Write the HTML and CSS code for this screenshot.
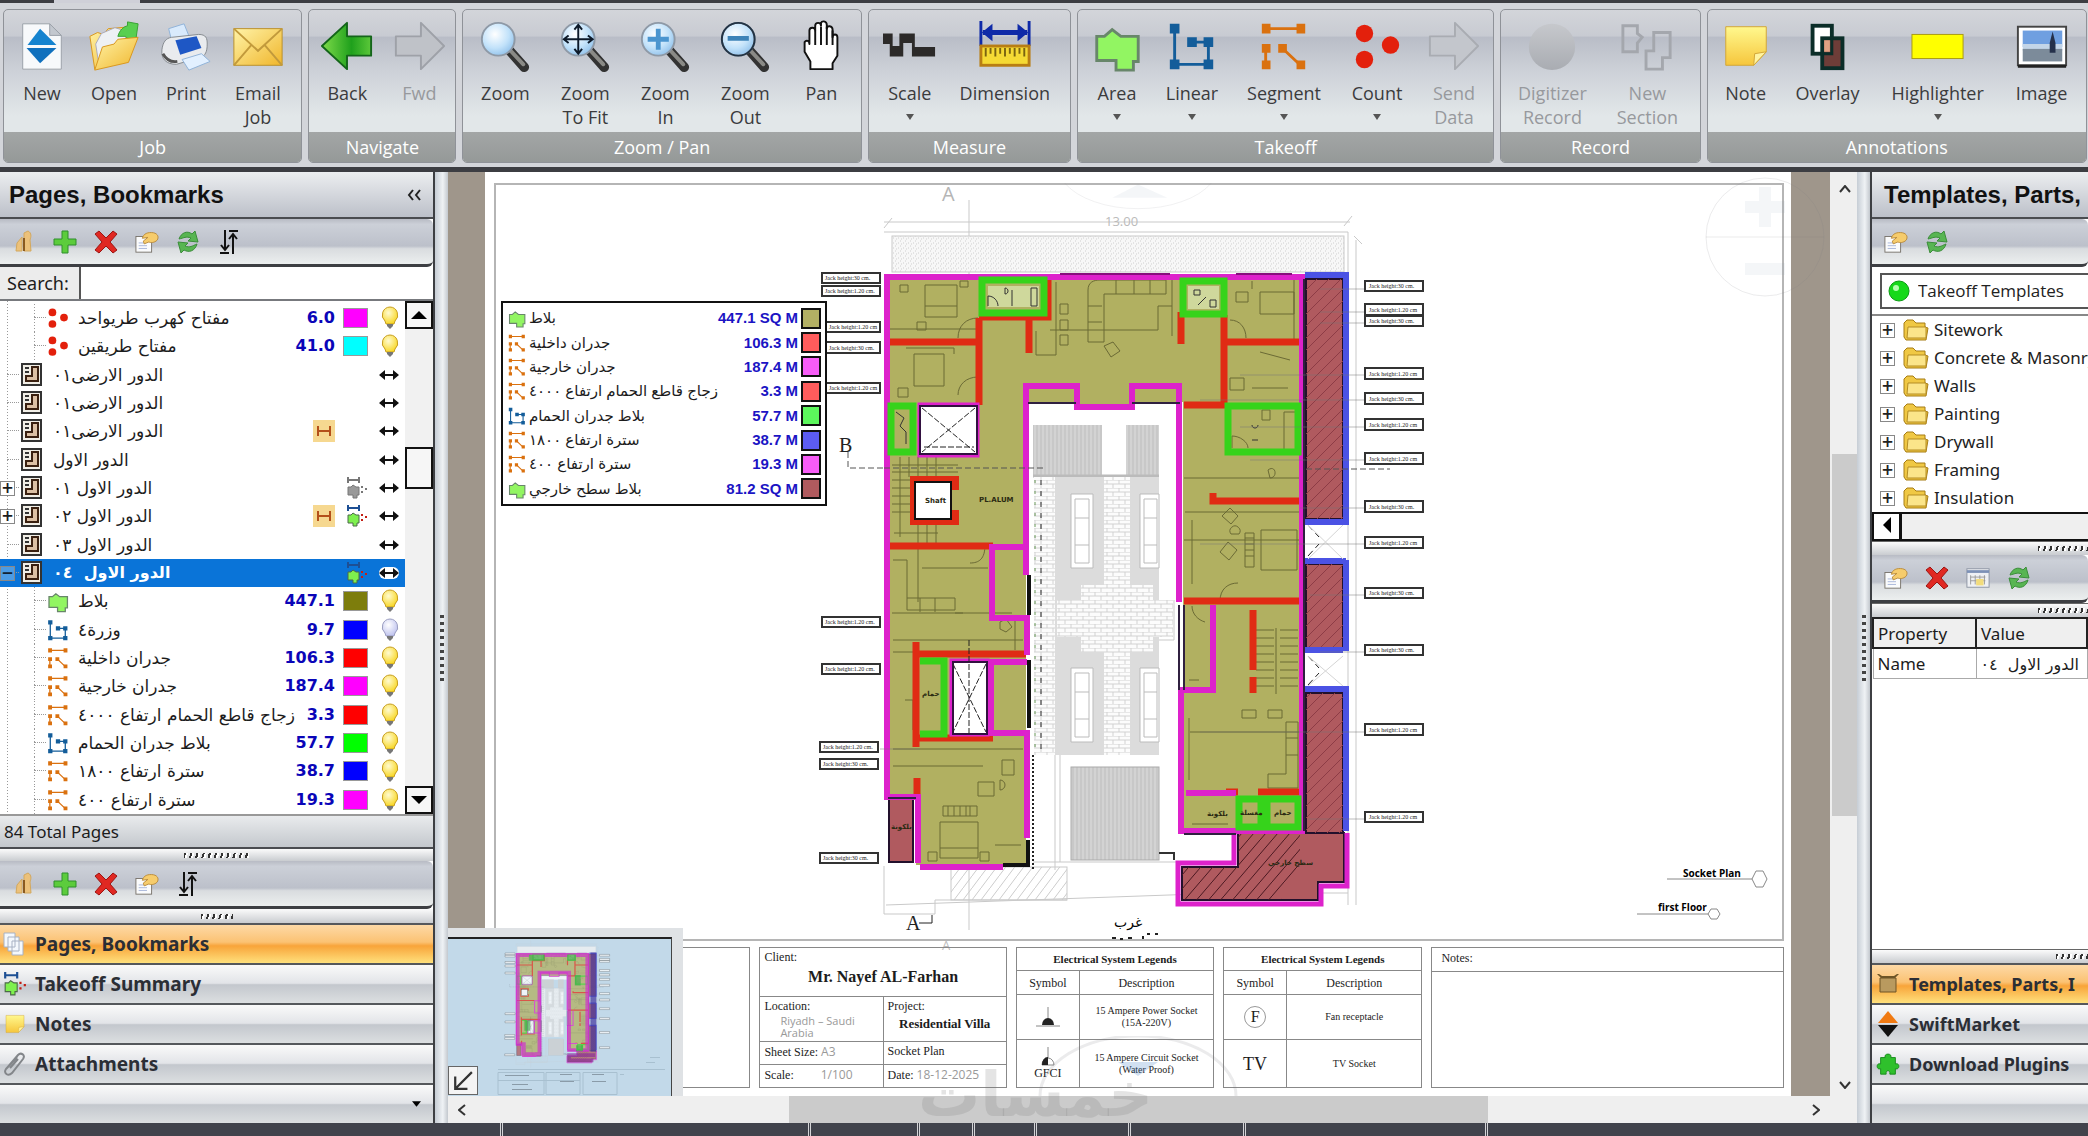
FILE: index.html
```html
<!DOCTYPE html>
<html lang="en">
<head>
<meta charset="utf-8">
<title>Takeoff</title>
<link rel="stylesheet" href="styles.css">
</head>
<body>
<svg class="defs" aria-hidden="true">
<defs>
  <linearGradient id="gYellow" x1="0" y1="0" x2="1" y2="1"><stop offset="0" stop-color="#fff3a8"/><stop offset="1" stop-color="#f0b62c"/></linearGradient>
  <linearGradient id="gNote" x1="0" y1="0" x2="0" y2="1"><stop offset="0" stop-color="#fff88e"/><stop offset="1" stop-color="#f6c63c"/></linearGradient>
  <linearGradient id="gGreen" x1="0" y1="0" x2="1" y2="0"><stop offset="0" stop-color="#7fdc4a"/><stop offset=".6" stop-color="#1fa01c"/><stop offset="1" stop-color="#5cc83a"/></linearGradient>
  <linearGradient id="gGray" x1="0" y1="0" x2="0" y2="1"><stop offset="0" stop-color="#c6c8cc"/><stop offset="1" stop-color="#a9acb2"/></linearGradient>
  <radialGradient id="gLens" cx=".4" cy=".35" r=".7"><stop offset="0" stop-color="#fff"/><stop offset=".6" stop-color="#c2e2fa"/><stop offset="1" stop-color="#8fc0ea"/></radialGradient>
  <radialGradient id="gBulb" cx=".4" cy=".35" r=".7"><stop offset="0" stop-color="#fffbd0"/><stop offset="1" stop-color="#f8d51c"/></radialGradient>
  <radialGradient id="gBulbOff" cx=".4" cy=".35" r=".7"><stop offset="0" stop-color="#fff"/><stop offset="1" stop-color="#bcc0ee"/></radialGradient>
  <pattern id="pHatch" width="12" height="12" patternUnits="userSpaceOnUse"><path d="M0 12L12 0" stroke="#8d3c46" stroke-width="1"/></pattern>
  <pattern id="pHatchDark" width="12" height="14" patternUnits="userSpaceOnUse"><path d="M0 14L12 0" stroke="#4a1720" stroke-width="1"/></pattern>
  <pattern id="pHatchLight" width="9" height="12" patternUnits="userSpaceOnUse"><path d="M0 12L9 0" stroke="#ccc" stroke-width="1"/></pattern>
  <pattern id="pStripe" width="4" height="4" patternUnits="userSpaceOnUse"><rect width="4" height="4" fill="#d3d3d3"/><path d="M1 0V4" stroke="#bdbdbd"/></pattern>
  <pattern id="pBrick" width="12" height="8" patternUnits="userSpaceOnUse"><rect width="12" height="8" fill="#fcfcfc"/><path d="M0 0H12M0 4H12M3 0V4M9 4V8" stroke="#d2d2d2" stroke-width="1"/></pattern>
  <pattern id="pDots" width="5" height="5" patternUnits="userSpaceOnUse"><rect width="5" height="5" fill="#f7f7f7"/><path d="M0 1h1M3 3h1M1 4h1" stroke="#cfcfcf"/></pattern>

  <symbol id="i-new" viewBox="0 0 56 56"><path d="M8 5h28l12 12v35H8z" fill="#f7f9fb" stroke="#9aa0a8"/><path d="M36 5v12h12z" fill="#c3c8cf" stroke="#9aa0a8"/><path d="M26 10L43 27H13z" fill="#1583cf"/><path d="M12 30H43L26 46z" fill="#1070bd"/></symbol>
  <symbol id="i-open" viewBox="0 0 56 56"><path d="M3 18l8-4 6 2 5-6 24-2-2 12-8 22L8 52z" fill="url(#gYellow)" stroke="#d8961c"/><path d="M9 26l6-11 14-6 13 4-4 12-20 8-6 12z" fill="#eef1f4" stroke="#aab"/><path d="M32 18c2-7 6-10 10-11V3l11 2-2 14-8 2-3-3z" fill="#58cf50" stroke="#37a033"/><path d="M8 53l8-24 12-3 4-5 21-2-10 26z" fill="url(#gYellow)" stroke="#d8961c"/></symbol>
  <symbol id="i-print" viewBox="0 0 56 56"><path d="M10 10l16-5 6 15-18 6z" fill="#d9eafc" stroke="#8fb2d8"/><path d="M3 32c1-8 4-12 10-13l28-3c8 0 9 4 9 10 0 8-2 12-7 14L18 47C8 47 2 42 3 32z" fill="#e9ebee" stroke="#84898f"/><path d="M17 22l22-4 5 12-22 7z" fill="#1e57c5"/><path d="M24 42l20-6 9 8-22 9z" fill="#e2f0ff" stroke="#8fb2d8"/><path d="M4 36c4 7 9 9 15 8" fill="none" stroke="#555" stroke-width="3"/></symbol>
  <symbol id="i-mail" viewBox="0 0 56 56"><rect x="3" y="10" width="50" height="38" fill="url(#gYellow)" stroke="#b98f2a"/><path d="M3 10L28 33 53 10M3 48L21 27M53 48L35 27" fill="none" stroke="#c29a3c" stroke-width="2"/></symbol>
  <symbol id="i-back" viewBox="0 0 56 56"><path d="M2 28L28 4v14h25v20H28v14z" fill="url(#gGreen)" stroke="#14651a" stroke-width="2" stroke-linejoin="round"/></symbol>
  <symbol id="i-fwd" viewBox="0 0 56 56"><path d="M54 28L30 4v14H4v20h26v14z" fill="#bfc2c8" stroke="#9ea1a8" stroke-width="2" stroke-linejoin="round"/></symbol>
  <symbol id="i-send" viewBox="0 0 56 56"><path d="M53 28L29 4v14H3v20h26v14z" fill="#c3c6cc" stroke="#a9acb2" stroke-width="2" stroke-linejoin="round"/></symbol>
  <symbol id="i-lens" viewBox="0 0 56 56"><path d="M33 33L48 50" stroke="#333" stroke-width="10" stroke-linecap="round"/><path d="M33 32L47 47" stroke="#8a8a86" stroke-width="4" stroke-linecap="round"/><circle cx="21" cy="21" r="17" fill="url(#gLens)" stroke="#8e99a6" stroke-width="2"/></symbol>
  <symbol id="i-fit" viewBox="0 0 56 56"><use href="#i-lens"/><path d="M21 6V36M6 21H36M17 11l4-5 4 5M17 31l4 5 4-5M11 17l-5 4 5 4M31 17l5 4-5 4" fill="none" stroke="#0d1a2a" stroke-width="2"/></symbol>
  <symbol id="i-in" viewBox="0 0 56 56"><use href="#i-lens"/><path d="M21 10V32M10 21H32" stroke="#4b95cf" stroke-width="5"/></symbol>
  <symbol id="i-out" viewBox="0 0 56 56"><use href="#i-lens"/><circle cx="21" cy="21" r="17" fill="none" stroke="#234" stroke-width="2"/><path d="M10 20H32" stroke="#3d83b8" stroke-width="5"/></symbol>
  <symbol id="i-pan" viewBox="0 0 56 56"><path d="M17 52V44L11 34V24c2-3 5-1 5 2V12c0-4 6-4 6 0V7c0-4 6-4 6 0V5c0-4 6-3 6 1v4c0-4 6-3 6 1v8c0-4 5-4 5 0v19l-5 8v6z" fill="#fff" stroke="#111" stroke-width="2" stroke-linejoin="round"/><path d="M22 12V27M28 8V27M34 8V27M40 12V27" stroke="#111" stroke-width="2"/></symbol>
  <symbol id="i-scale" viewBox="0 0 56 56"><path d="M0 15H10V28H17V15H33V29H54V39H30V25H21V39H7V26H0z" fill="#2c2a29"/></symbol>
  <symbol id="i-dim" viewBox="0 0 56 56"><path d="M3 2V28M53 2V28" stroke="#0f2aa8" stroke-width="3"/><path d="M5 14H51" stroke="#0f2aa8" stroke-width="5"/><path d="M4 14l11-9v18zM52 14L41 5v18z" fill="#0f2aa8"/><rect x="3" y="28" width="50" height="20" fill="#f5da34" stroke="#b87e14" stroke-width="3"/><path d="M8 30v9M13 30v6M18 30v9M23 30v6M28 30v9M33 30v6M38 30v9M43 30v6M48 30v9" stroke="#7a6410" stroke-width="2"/></symbol>
  <symbol id="i-area" viewBox="0 0 56 56"><path d="M7 18H15L23 11 32 18H50V44H45V53H27V43H7z" fill="#92f562" stroke="#68866a" stroke-width="3"/></symbol>
  <symbol id="i-linear" viewBox="0 0 56 56"><path d="M10 9V47H45V24H28" fill="none" stroke="#135d9a" stroke-width="3"/><path d="M5 5h10v10H5zM5 42h10v10H5zM40 42h10v10H40zM40 19h10v10H40zM23 19h10v10H23z" fill="#135d9a"/></symbol>
  <symbol id="i-segment" viewBox="0 0 56 56"><path d="M9 10H46M9 31V47M26 30L44 47" fill="none" stroke="#da710f" stroke-width="3"/><path d="M5 5h9v10H5zM41 5h9v10H41zM5 26h9v9H5zM5 43h9v9H5zM22 26h9v9H22zM41 43h9v9H41z" fill="#da710f"/></symbol>
  <symbol id="i-count" viewBox="0 0 56 56"><g fill="#e3200c"><circle cx="15" cy="15" r="9"/><circle cx="42" cy="27" r="9"/><circle cx="15" cy="42" r="9"/></g></symbol>
  <symbol id="i-record" viewBox="0 0 56 56"><ellipse cx="28" cy="29" rx="24" ry="24" fill="url(#gGray)"/></symbol>
  <symbol id="i-section" viewBox="0 0 56 56"><path d="M3 7h15v8l5 4-5 6v9H3zM27 33h8V14h17v26h-8v12H27z" fill="none" stroke="#a4a7ad" stroke-width="3"/></symbol>
  <symbol id="i-note" viewBox="0 0 56 56"><path d="M7 8H49V34L36 48H7z" fill="url(#gNote)" stroke="#d1a537"/><path d="M49 34L36 48l1-12z" fill="#fff4a0" stroke="#d1a537"/></symbol>
  <symbol id="i-overlay" viewBox="0 0 56 56"><rect x="12" y="7" width="20" height="29" fill="#fff" stroke="#0b2d28" stroke-width="4"/><rect x="22" y="20" width="21" height="31" fill="#6e3d38" stroke="#0b2d28" stroke-width="4"/><rect x="24" y="22" width="6" height="12" fill="#e2a183"/><path d="M22 36H32V20" fill="none" stroke="#0b2d28" stroke-width="3"/></symbol>
  <symbol id="i-high" viewBox="0 0 56 56"><rect x="1" y="16" width="53" height="25" fill="#ff0" stroke="#a89a12"/></symbol>
  <symbol id="i-image" viewBox="0 0 56 56"><rect x="3" y="8" width="50" height="40" fill="#fff" stroke="#444" stroke-width="2"/><rect x="8" y="12" width="41" height="17" fill="#6f9fe0"/><path d="M8 26h41v7H8z" fill="#c3d5e8"/><rect x="8" y="31" width="41" height="13" fill="#7c8b9a"/><path d="M39 13l3 12v10h-6V25z" fill="#24304a"/><path d="M3 49H53" stroke="#222" stroke-width="3"/></symbol>

  <symbol id="t-book" viewBox="0 0 24 24"><path d="M4 21l1-8 5-6v14zM12 21V3l4-2c4 2 3 6 2 9l1 11z" fill="#ecc17a" stroke="#d3a85e"/><path d="M12 8v13" stroke="#8a5a20" stroke-width="2"/></symbol>
  <symbol id="t-plus" viewBox="0 0 24 24"><path d="M9 1h6v8h8v6h-8v8H9v-8H1V9h8z" fill="#5ccc3c" stroke="#2f8f2c"/></symbol>
  <symbol id="t-x" viewBox="0 0 24 24"><path d="M1 4l4-3 7 7 7-7 4 3-7 8 7 8-4 3-7-7-7 7-4-3 7-8z" fill="#e02822" stroke="#9c1512"/></symbol>
  <symbol id="t-prop" viewBox="0 0 26 24"><rect x="1" y="6" width="17" height="17" fill="#fafbfc" stroke="#77726a"/><path d="M4 13h8M4 16h9M4 19h9" stroke="#a5b4d8"/><path d="M8 8c1-5 6-7 12-6 5 1 6 5 4 8-3 3-7 3-9 2l-5 2-1-3 5-4z" fill="#f6cc6c" stroke="#b98a3a"/></symbol>
  <symbol id="t-refresh" viewBox="0 0 24 24"><path d="M3 9C5 3 11 0 16 4l3-3 3 11-10-1 3-3c-5-2-7 0-12 1zM21 14c-2 7-8 9-13 6l-3 3-3-11 10 1-3 3c5 2 7 0 12-2z" fill="#58b552" stroke="#3b8d3a"/></symbol>
  <symbol id="t-sort" viewBox="0 0 18 24"><path d="M5 0V20M1 15l4 5 4-5M0 23H9M13 24V4M9 9l4-5 4 5M9 1H18" fill="none" stroke="#111" stroke-width="2"/></symbol>
  <symbol id="t-grid" viewBox="0 0 26 22"><rect x="1" y="1" width="24" height="20" fill="#eef0f4" stroke="#8b93a2"/><path d="M1 4H25" stroke="#7d91b6" stroke-width="3"/><path d="M5 10h16M5 14h16M5 8v10M10 8v10M15 8v10M20 8v10" stroke="#999"/><rect x="11" y="12" width="8" height="7" fill="#f2dc7c"/></symbol>
  <symbol id="p-page" viewBox="0 0 21 24"><rect x="1" y="1" width="19" height="21" fill="#f1eee6" stroke="#333" stroke-width="2"/><path d="M4 5h4M4 9h4" stroke="#333" stroke-width="2"/><path d="M11 4h6v14H5v-5h6z" fill="#dcc0a4" stroke="#3a2010" stroke-width="2"/></symbol>
  <symbol id="p-arrows" viewBox="0 0 20 12"><path d="M1 6H19" stroke="#111" stroke-width="2"/><path d="M0 6l6-5v10zM20 6l-6-5v10z" fill="#111"/></symbol>
  <symbol id="p-bulb" viewBox="0 0 18 24"><path d="M9 1a8 8 0 0 0-5 14l1 3h8l1-3A8 8 0 0 0 9 1z" fill="url(#gBulb)" stroke="#c69d20"/><path d="M6 18h6v2l-3 3-3-3z" fill="#777"/></symbol>
  <symbol id="p-bulboff" viewBox="0 0 18 24"><path d="M9 1a8 8 0 0 0-5 14l1 3h8l1-3A8 8 0 0 0 9 1z" fill="url(#gBulbOff)" stroke="#9a9dc0"/><path d="M6 18h6v2l-3 3-3-3z" fill="#777"/></symbol>
  <symbol id="p-h" viewBox="0 0 22 22"><rect width="22" height="22" fill="#f6d890"/><path d="M5 6v10M17 6v10M5 11H17" stroke="#b4501a" stroke-width="2"/></symbol>
  <symbol id="p-sum" viewBox="0 0 22 22"><path d="M2 0v6M13 0v6M2 3h11" stroke="#1d4f94" stroke-width="2"/><path d="M2 10h3l2-2 3 2h3v8h-2v3H7v-3H2z" fill="#7ef04e" stroke="#4b6a48"/><path d="M15 10h2M15 15h2M19 12h2" stroke="#c31f14" stroke-width="2"/></symbol>
  <symbol id="p-sumgray" viewBox="0 0 22 22"><path d="M2 0v6M13 0v6M2 3h11M15 10h2M15 15h2M19 12h2" stroke="#777" stroke-width="2"/><path d="M2 10h3l2-2 3 2h3v8h-2v3H7v-3H2z" fill="#999" stroke="#777"/></symbol>
  <symbol id="p-folder" viewBox="0 0 26 22"><path d="M1 4l3-3h6l3 3h9v4l3 1-2 12H3L1 18z" fill="#f0c844" stroke="#a67c14"/><path d="M5 8h18v11H4z" fill="#fbe58a" stroke="#b58d24"/></symbol>
  <symbol id="n-pages" viewBox="0 0 24 24"><path d="M1 1h11v14H1zM5 5h11v14H5zM9 9h11v14H9z" fill="#f4f8fd" stroke="#a8b2c4"/></symbol>
  <symbol id="n-clip" viewBox="0 0 24 26"><path d="M4 17L15 4c3-3 8 0 5 4L9 22c-4 4-9 0-6-4L14 6M7 17l8-9" fill="none" stroke="#83868a" stroke-width="2"/></symbol>
  <symbol id="n-box" viewBox="0 0 24 22"><path d="M4 5h16v14H4z" fill="#b99a5f" stroke="#6e5526"/><path d="M1 1l4 4h14l4-4-2 0-3 2H6L3 1z" fill="#6e5526"/></symbol>
  <symbol id="n-swift" viewBox="0 0 24 26"><path d="M12 0l10 12H2z" fill="#f07a12"/><path d="M2 14h20L12 26z" fill="#111"/></symbol>
  <symbol id="n-plug" viewBox="0 0 26 26"><path d="M10 6c-2-5 8-5 6 0h5v7c5-2 5 7 0 5v6h-6c1-5-5-5-4 0H5v-6c-5 2-5-7 0-5V6z" fill="#2fc02c" stroke="#178a1b"/></symbol>
</defs>
</svg>

<header class="ribbon">
  <section class="group g-job"><div class="tools">
    <button class="tool"><svg><use href="#i-new"/></svg>New</button>
    <button class="tool"><svg><use href="#i-open"/></svg>Open</button>
    <button class="tool"><svg><use href="#i-print"/></svg>Print</button>
    <button class="tool"><svg><use href="#i-mail"/></svg>Email<br>Job</button>
  </div><h2>Job</h2></section>
  <section class="group g-nav"><div class="tools">
    <button class="tool"><svg><use href="#i-back"/></svg>Back</button>
    <button class="tool" disabled><svg><use href="#i-fwd"/></svg>Fwd</button>
  </div><h2>Navigate</h2></section>
  <section class="group g-zoom"><div class="tools">
    <button class="tool"><svg><use href="#i-lens"/></svg>Zoom</button>
    <button class="tool"><svg><use href="#i-fit"/></svg>Zoom<br>To Fit</button>
    <button class="tool"><svg><use href="#i-in"/></svg>Zoom<br>In</button>
    <button class="tool"><svg><use href="#i-out"/></svg>Zoom<br>Out</button>
    <button class="tool"><svg><use href="#i-pan"/></svg>Pan</button>
  </div><h2>Zoom / Pan</h2></section>
  <section class="group g-measure"><div class="tools">
    <button class="tool drop"><svg><use href="#i-scale"/></svg>Scale</button>
    <button class="tool"><svg><use href="#i-dim"/></svg>Dimension</button>
  </div><h2>Measure</h2></section>
  <section class="group g-takeoff"><div class="tools">
    <button class="tool drop"><svg><use href="#i-area"/></svg>Area</button>
    <button class="tool drop"><svg><use href="#i-linear"/></svg>Linear</button>
    <button class="tool drop"><svg><use href="#i-segment"/></svg>Segment</button>
    <button class="tool drop"><svg><use href="#i-count"/></svg>Count</button>
    <button class="tool" disabled><svg><use href="#i-send"/></svg>Send<br>Data</button>
  </div><h2>Takeoff</h2></section>
  <section class="group g-record"><div class="tools">
    <button class="tool" disabled><svg><use href="#i-record"/></svg>Digitizer<br>Record</button>
    <button class="tool" disabled><svg><use href="#i-section"/></svg>New<br>Section</button>
  </div><h2>Record</h2></section>
  <section class="group g-notes"><div class="tools">
    <button class="tool"><svg><use href="#i-note"/></svg>Note</button>
    <button class="tool"><svg><use href="#i-overlay"/></svg>Overlay</button>
    <button class="tool drop"><svg><use href="#i-high"/></svg>Highlighter</button>
    <button class="tool"><svg><use href="#i-image"/></svg>Image</button>
  </div><h2>Annotations</h2></section>
</header>

<main class="work">
  <aside class="panel left">
    <div class="panel-head"><h1>Pages, Bookmarks</h1><button class="collapse" aria-label="Collapse"><svg viewBox="0 0 14 12"><path d="M6 1L2 6l4 5M13 1L9 6l4 5" fill="none" stroke="#222" stroke-width="2"/></svg></button></div>
    <div class="toolbar">
      <button aria-label="Bookmark"><svg><use href="#t-book"/></svg></button>
      <button aria-label="Add"><svg><use href="#t-plus"/></svg></button>
      <button aria-label="Delete"><svg><use href="#t-x"/></svg></button>
      <button aria-label="Properties"><svg><use href="#t-prop"/></svg></button>
      <button aria-label="Refresh"><svg><use href="#t-refresh"/></svg></button>
      <button aria-label="Sort"><svg><use href="#t-sort"/></svg></button>
    </div>
    <div class="search"><label for="q">Search:</label><input id="q" type="text"></div>
    <div class="tree-wrap">
      <ul class="tree">
        <li class="item"><svg class="ic"><use href="#i-count"/></svg><span class="name" dir="rtl">مفتاح كهرب طريواحد</span><b>6.0</b><i class="sw magenta"></i><svg class="bulb"><use href="#p-bulb"/></svg></li>
        <li class="item"><svg class="ic"><use href="#i-count"/></svg><span class="name" dir="rtl">مفتاح طريقين</span><b>41.0</b><i class="sw cyan"></i><svg class="bulb"><use href="#p-bulb"/></svg></li>
        <li class="page"><svg class="pg"><use href="#p-page"/></svg><span class="name" dir="rtl">الدور الارضى٠١</span><svg class="arr"><use href="#p-arrows"/></svg></li>
        <li class="page"><svg class="pg"><use href="#p-page"/></svg><span class="name" dir="rtl">الدور الارضى٠١</span><svg class="arr"><use href="#p-arrows"/></svg></li>
        <li class="page"><svg class="pg"><use href="#p-page"/></svg><span class="name" dir="rtl">الدور الارضى٠١</span><svg class="mark"><use href="#p-h"/></svg><span class="mark"></span><svg class="arr"><use href="#p-arrows"/></svg></li>
        <li class="page"><svg class="pg"><use href="#p-page"/></svg><span class="name" dir="rtl">الدور الاول</span><svg class="arr"><use href="#p-arrows"/></svg></li>
        <li class="page"><button class="exp" aria-label="Expand">+</button><svg class="pg"><use href="#p-page"/></svg><span class="name" dir="rtl">الدور الاول ٠١</span><svg class="mark"><use href="#p-sumgray"/></svg><svg class="arr"><use href="#p-arrows"/></svg></li>
        <li class="page"><button class="exp" aria-label="Expand">+</button><svg class="pg"><use href="#p-page"/></svg><span class="name" dir="rtl">الدور الاول ٠٢</span><svg class="mark"><use href="#p-h"/></svg><svg class="mark"><use href="#p-sum"/></svg><svg class="arr"><use href="#p-arrows"/></svg></li>
        <li class="page"><svg class="pg"><use href="#p-page"/></svg><span class="name" dir="rtl">الدور الاول ٠٣</span><svg class="arr"><use href="#p-arrows"/></svg></li>
        <li class="page selected"><button class="exp" aria-label="Collapse">−</button><svg class="pg"><use href="#p-page"/></svg><span class="name" dir="rtl">الدور الاول &nbsp;٠٤</span><svg class="mark"><use href="#p-sum"/></svg><svg class="arr"><use href="#p-arrows"/></svg></li>
        <li class="item"><svg class="ic"><use href="#i-area"/></svg><span class="name" dir="rtl">بلاط</span><b>447.1</b><i class="sw olive"></i><svg class="bulb"><use href="#p-bulb"/></svg></li>
        <li class="item"><svg class="ic"><use href="#i-linear"/></svg><span class="name" dir="rtl">وزرة٤</span><b>9.7</b><i class="sw blue"></i><svg class="bulb"><use href="#p-bulboff"/></svg></li>
        <li class="item"><svg class="ic"><use href="#i-segment"/></svg><span class="name" dir="rtl">جدران داخلية</span><b>106.3</b><i class="sw red"></i><svg class="bulb"><use href="#p-bulb"/></svg></li>
        <li class="item"><svg class="ic"><use href="#i-segment"/></svg><span class="name" dir="rtl">جدران خارجية</span><b>187.4</b><i class="sw magenta"></i><svg class="bulb"><use href="#p-bulb"/></svg></li>
        <li class="item"><svg class="ic"><use href="#i-segment"/></svg><span class="name" dir="rtl">زجاج قاطع الحمام ارتفاع ٤٠٠٠</span><b>3.3</b><i class="sw red"></i><svg class="bulb"><use href="#p-bulb"/></svg></li>
        <li class="item"><svg class="ic"><use href="#i-linear"/></svg><span class="name" dir="rtl">بلاط جدران الحمام</span><b>57.7</b><i class="sw green"></i><svg class="bulb"><use href="#p-bulb"/></svg></li>
        <li class="item"><svg class="ic"><use href="#i-segment"/></svg><span class="name" dir="rtl">سترة ارتفاع ١٨٠٠</span><b>38.7</b><i class="sw blue"></i><svg class="bulb"><use href="#p-bulb"/></svg></li>
        <li class="item"><svg class="ic"><use href="#i-segment"/></svg><span class="name" dir="rtl">سترة ارتفاع ٤٠٠</span><b>19.3</b><i class="sw magenta"></i><svg class="bulb"><use href="#p-bulb"/></svg></li>
      </ul>
      <div class="tree-scroll">
        <button aria-label="Scroll up"><svg viewBox="0 0 16 8"><path d="M0 8L8 0l8 8z"/></svg></button>
        <span class="space-a"></span><span class="thumb"></span><span class="space-b"></span>
        <button aria-label="Scroll down"><svg viewBox="0 0 16 8"><path d="M0 0L8 8l8-8z"/></svg></button>
      </div>
    </div>
    <p class="total">84 Total Pages</p>
    <div class="grip thin"><span class="wide"></span></div>
    <div class="toolbar">
      <button aria-label="Bookmark"><svg><use href="#t-book"/></svg></button>
      <button aria-label="Add"><svg><use href="#t-plus"/></svg></button>
      <button aria-label="Delete"><svg><use href="#t-x"/></svg></button>
      <button aria-label="Properties"><svg><use href="#t-prop"/></svg></button>
      <button aria-label="Sort"><svg><use href="#t-sort"/></svg></button>
    </div>
    <div class="grip"><span></span></div>
    <nav class="stack">
      <button class="active"><svg><use href="#n-pages"/></svg>Pages, Bookmarks</button>
      <button><svg><use href="#p-sum"/></svg>Takeoff Summary</button>
      <button><svg><use href="#i-note"/></svg>Notes</button>
      <button><svg><use href="#n-clip"/></svg>Attachments</button>
      <button class="more" aria-label="More"><svg viewBox="0 0 10 6"><path d="M0 0L5 6l5-6z"/></svg></button>
    </nav>
  </aside>

  <div class="splitter"><span></span></div>

  <section class="view">
    <div class="canvas">
      <div class="sheet">
        <div class="frame">
          <svg class="plan" viewBox="495 183 1288 758">
            <g id="plan">
              <g fill="none" stroke="#c9c9c9">
                <path d="M884 222H1350M969 200V930M884 232H1348V905M884 228l8-10M1344 226l8-10M1354 236l8 8M1356 240V905M886 905l340-12H1348M884 866V914H935V900H1067M1055 755V870M1060 755V862M1033 862H1180M1174 600V640H1150"/>
                <rect x="892" y="236" width="452" height="36" fill="url(#pDots)"/>
                <rect x="951" y="867" width="116" height="33" fill="url(#pHatchLight)"/>
              </g>
              <g>
                <rect x="1033" y="404" width="144" height="22" fill="#fff"/>
                <rect x="1033" y="425" width="69" height="50" fill="url(#pStripe)"/><rect x="1126" y="425" width="33" height="50" fill="url(#pStripe)"/>
                <path d="M1033 476H1159" stroke="#bbb" stroke-width="3"/>
                <rect x="1034" y="477" width="21" height="278" fill="url(#pBrick)"/>
                <rect x="1055" y="477" width="104" height="278" fill="#dcdcdc"/>
                <rect x="1104" y="477" width="26" height="278" fill="url(#pBrick)"/>
                <rect x="1081" y="585" width="72" height="67" fill="url(#pBrick)"/><rect x="1057" y="600" width="116" height="37" fill="url(#pBrick)"/>
                <g fill="#fff" stroke="#bbb"><path d="M1071 494h22v74h-22zM1140 494h19v74h-19zM1071 668h22v74h-22zM1140 668h19v74h-19z"/><path d="M1075 499h14v64h-14zM1144 499h13v64h-13zM1075 673h14v64h-14zM1144 673h13v64h-13zM1075 518h14M1075 545h14M1144 518h13M1144 545h13M1075 692h14M1075 719h14M1144 692h13M1144 719h13" fill="none"/></g>
                <rect x="1071" y="767" width="88" height="93" fill="url(#pStripe)" stroke="#aaa"/><path d="M1159 853h15M1174 852v8" stroke="#333" stroke-width="2"/>
                <path d="M1041 480V755" stroke="#222" stroke-dasharray="5 6"/><path d="M1035 480V755" stroke="#6a9a5a" stroke-dasharray="3 8"/><path d="M1033 755V870" stroke="#222" stroke-dasharray="2 2" stroke-width="2"/>
              </g>
              <path d="M888 276H1302V833H1183V402H1132V406H1077V402H1026V865H916V797H888z" fill="#b1b061"/>
              <g fill="#b05a5f" stroke="#22102c" stroke-width="2">
                <path d="M1306 279h37v240h-37zM1306 564h37v84h-37zM1306 693h37v140h-37zM889 799h24v63h-24z"/>
                <path d="M1238 833H1344V882H1318V900H1182V867H1238z"/>
              </g>
              <path d="M1306 279h37v240h-37zM1306 564h37v84h-37zM1306 693h37v140h-37z" fill="url(#pHatch)"/>
              <path d="M1238 834H1300V870L1280 900H1182V867H1238z" fill="url(#pHatchDark)"/>
              <path d="M1305 275H1346V522H1305M1346 560V651M1305 561H1346M1305 650H1343M1305 689H1346V831" fill="none" stroke="#4b52e4" stroke-width="6"/>
              <g fill="none" stroke="#6b6a35" stroke-width="1">
                <path d="M925 285h32v32h-32zM925 306h32M900 285h8v7h-8zM960 281h8v6h-8zM917 322h9v8h-9zM890 329h90M958 338c0-12 8-20 20-20M914 354h30v32h-30zM906 348h48v6M958 395c0-10 8-18 20-18M898 388h10v9h-10z"/>
                <path d="M1088 290c0-8 6-10 12-10h66v14h-62v48h-16zM1088 306h14M1088 322h14M1116 280v14M1134 280v14M1150 280v14M1172 280v56M1060 304h8v10h-8zM1060 320h8v10h-8zM1060 335h8v10h-8zM1056 282v73h-20v-24M1104 346l9-4 7 9-9 6zM1050 330h108v-24h14"/>
                <path d="M1236 292h12v10h-12zM1260 292h34v22h-34zM1230 320c10 0 16 8 16 18M1230 378h14v12h-14zM1252 388h36M1260 352l30 8M1294 280v60M1230 430v-6M1262 410h8v10h-8zM1284 412h12v38h-12zM1232 448v-12c8 0 16 6 16 12M1268 470c8-6 10 8 2 8z"/>
                <path d="M892 465h66M892 472h66M892 480h20M892 488h20M892 496h20M892 504h20M892 512h20M894 533h44M900 457v80M909 457v20M918 457v20M927 457v20M936 457v20M918 524v20M927 524v20M936 524v20"/>
                <path d="M893 560h14v50h48v-12h-48M918 548v54M922 568h66M892 613h120M893 652h90M905 700h8v30M985 545c0 14-6 18-15 18M955 613h8M920 598v14M935 598v14M1000 622l6-3 6 8-6 5-6-3zM1015 620v30M893 640h130M893 749h130M893 766h90M1002 760h12v15h-12zM978 782h16v14h-16zM1000 780a5 5 0 1 1 0 10zM943 806h34v10h-34zM940 822h38v36h-38zM940 848h38M928 852h9v9h-9zM980 852h9v9h-9zM995 845h26M948 806v10M954 806v10M960 806v10M966 806v10M970 806v10"/>
                <path d="M1222 516l8-8 8 8-7 8zM1220 552l8-10 9 8-8 10zM1231 534a5 5 0 1 1 8 0zM1245 533h9v34h-9zM1261 530h36v40h-36zM1185 512h115M1192 520v64M1245 538h9M1245 544h9M1245 550h9M1245 556h9M1220 601c0-12 8-18 18-18M1192 606c0 8 6 14 13 16M1189 680h10M1256 630h18M1256 638h18M1256 646h18M1256 654h18M1256 662h18M1256 670h18M1256 678h18M1256 686h18M1280 630h18M1280 638h18M1280 646h18M1280 654h18M1280 662h18M1280 670h18M1280 678h18M1280 686h18M1276 628v66M1242 710h14v8h-14zM1268 710h14v8h-14zM1286 722h12v66h-30v-14h18zM1286 738h12M1286 755h12M1190 732h110M1189 718v62"/>
                <path d="M1184 540H1300M1192 824h36M1184 478H1300M1252 281v8"/>
              </g>
              <g fill="none" stroke="#e02b14" stroke-width="7">
                <path d="M890 342H981M979 318V405M979 317H1048V277M1029 317V353M1181 312V344M1224 315V405H1184M1224 342H1300M1213 493V501H1300M890 546H993M1184 601H1300M1253 610V670M1253 677V693M916 642V747M916 654H1026M916 738H993M917 778V797M1226 792H1238M1258 792H1300"/>
                <path d="M955 490V480H914V521H955V510" stroke-width="8"/>
              </g>
              <g fill="none" stroke="#dd22cb" stroke-width="6">
                <path d="M918 863V797H887V277H1302V831H1181V690H1213V605M1026 575V386H1077V407H1132V386H1179V602M1027 547H992V618H1027V655M1027 662H991V733H1027V838M920 867H1003M1186 793H1236"/>
                <path d="M1234 832V863H1178V904H1321V886H1347V833" stroke-width="5"/>
              </g>
              <path d="M1029 575V615M1029 660V728M1003 865H1028V840" fill="none" stroke="#111" stroke-width="4"/>
              <path d="M1179 605V690M1184 605V690M1184 834H1236M1028 403H1076M1132 403H1180M888 798H916M1304 279V831" fill="none" stroke="#302040" stroke-width="2"/>
              <path d="M1060 274H1170M1236 274H1292" fill="none" stroke="#86107c" stroke-width="2"/>
              <g fill="none" stroke="#36d31b" stroke-width="7">
                <path d="M982 280h62v33h-62zM1183 281h41v33h-41zM891 406h22v46h-22zM1228 406h70v46h-70zM920 661H944V734H920M1239 799h22v28h-22zM1267 799h31v28h-31z"/>
              </g>
              <path d="M988 286h51v21h-51zM1188 286h31v23h-31z" fill="#cfd89c"/>
              <path d="M988 306v-10c6 0 10 5 10 10M1005 288c4 0 4 6 0 6zM1012 290v16M1031 288h6v18h-6zM1194 290h6v5h-6zM1210 300h6v7h-6zM1198 305l8-8M1252 425c0 4 6 4 6 0M1252 440h6M896 412l8 6-4 8 6 6v12" fill="none" stroke="#333"/>
              <path d="M920 405h57v50h-57zM952 661h35v73h-35z" fill="#fff" stroke="#dd22cb" stroke-width="5"/>
              <path d="M920 406h57v48h-57zM953 662h34v72h-34z" fill="#fff" stroke="#321140" stroke-width="2"/>
              <path d="M922 408l53 44M975 408l-53 44M953 664l33 68M986 664l-33 68M969 640v95M924 447h50" fill="none" stroke="#222" stroke-dasharray="6 2"/>
              <rect x="915" y="482" width="36" height="37" fill="#fff" stroke="#111" stroke-width="2"/>
              <path d="M848 452V468H884M884 468H1045M1306 469H1390" fill="none" stroke="#555" stroke-dasharray="6 3"/>
              <path d="M1308 525l11 12M1308 556l11-12M1308 656l11 12M1308 685l11-12" stroke="#222" stroke-dasharray="7 4"/>
              <path d="M1343 525l-35 34M1343 656l-35 30M1308 525l35 34M1308 656l35 30" stroke="#d5d5d5" fill="none"/>
              <g stroke="#777"><path d="M1320 289H1365M1320 312H1365M1320 323H1365M1240 375H1365M1200 400H1365M1240 427H1365M1250 460H1365M1300 508H1365M1200 544H1365M1310 595H1365M1320 652H1365M1200 732H1365M1308 819H1365M880 749H920" stroke-width=".5"/></g>
              <path d="M822 273h58v10h-58zM822 286h58v10h-58zM822 322h58v10h-58zM822 342h58v11h-58zM822 383h58v10h-58zM822 617h58v10h-58zM822 664h58v10h-58zM820 742h58v10h-58zM820 759h58v10h-58zM820 853h58v10h-58zM1365 281h58v10h-58zM1365 304h58v11h-58zM1365 316h58v10h-58zM1365 368h58v11h-58zM1365 393h58v11h-58zM1365 419h58v11h-58zM1365 453h58v11h-58zM1365 501h58v11h-58zM1365 537h58v11h-58zM1365 588h58v10h-58zM1365 645h58v10h-58zM1365 724h58v11h-58zM1365 812h58v10h-58z" fill="#fff" stroke="#333" stroke-width="2"/>
            </g>
            <g class="tag">
              <text x="825" y="280">Jack height:30 cm.</text><text x="825" y="293">Jack height:1.20 cm.</text><text x="829" y="329">Jack height:1.20 cm</text><text x="829" y="350">Jack height:30 cm.</text><text x="829" y="390">Jack height:1.20 cm</text><text x="825" y="624">Jack height:1.20 cm.</text><text x="825" y="671">Jack height:1.20 cm.</text><text x="823" y="749">Jack height:1.20 cm.</text><text x="823" y="766">Jack height:30 cm.</text><text x="823" y="860">Jack height:30 cm.</text>
              <text x="1369" y="288">Jack height:30 cm.</text><text x="1369" y="312">Jack height:1.20 cm</text><text x="1369" y="323">Jack height:30 cm.</text><text x="1369" y="376">Jack height:1.20 cm</text><text x="1369" y="401">Jack height:30 cm.</text><text x="1369" y="427">Jack height:1.20 cm</text><text x="1369" y="461">Jack height:1.20 cm</text><text x="1369" y="509">Jack height:30 cm.</text><text x="1369" y="545">Jack height:1.20 cm</text><text x="1369" y="595">Jack height:30 cm.</text><text x="1369" y="652">Jack height:30 cm.</text><text x="1369" y="732">Jack height:1.20 cm</text><text x="1369" y="819">Jack height:1.20 cm</text>
            </g>
            <g class="small"><text x="925" y="503">Shaft</text><text x="979" y="502">PL.ALUM</text><text x="891" y="829">بلكونة</text><text x="1207" y="816">بلكونة</text><text x="1240" y="815">مغسلة</text><text x="1274" y="815">حمام</text><text x="1268" y="865">سطح خارجي</text><text x="922" y="696">حمام</text></g>
            <g class="axis"><text x="942" y="201" fill="#b5b5b5" class="sans">A</text><text x="839" y="452" fill="#222">B</text><text x="906" y="930" fill="#222">A</text><path d="M919 923h13v-8" fill="none" stroke="#222"/></g>
            <text x="1105" y="226" class="dim">13.00</text><text x="942" y="950" class="dim">A</text>
            <g class="plate"><text x="1683" y="877">Socket Plan</text><text x="1658" y="911">first Floor</text><path d="M1667 879H1752M1637 914H1708M1752 879l4-8h7l4 8-4 8h-7zM1708 914l3-5h6l3 5-3 5h-6z" fill="none" stroke="#888"/></g>
            <text x="1114" y="927" class="sub">غرب</text><path d="M1112 938h4M1120 939h3M1128 938h4M1147 934h3M1143 939v-3M1155 934h3" stroke="#222" stroke-width="2"/>
          </svg>
        </div>
        <div class="titles">
          <div class="box"></div>
          <table class="client"><tbody>
            <tr class="r-big"><td colspan="2">Client:<strong>Mr. Nayef AL-Farhan</strong></td></tr>
            <tr class="r-mid"><td>Location:<em>Riyadh – Saudi<br>Arabia</em></td><td>Project:<strong class="proj">Residential Villa</strong></td></tr>
            <tr class="r-low"><td>Sheet Size: <span>A3</span></td><td>Socket Plan</td></tr>
            <tr class="r-low"><td>Scale: <span class="far">1/100</span></td><td>Date: <span>18-12-2025</span></td></tr>
          </tbody></table>
          <table class="legend-t"><colgroup><col class="c-sym"><col></colgroup><thead>
            <tr><th colspan="2">Electrical System Legends</th></tr>
            <tr class="cols"><td>Symbol</td><td>Description</td></tr></thead><tbody>
            <tr class="r-mid"><td><svg viewBox="0 0 24 20"><path d="M12 0V11M0 19H24" stroke="#888"/><path d="M6 18a6 7 0 0 1 12 0z" fill="#222"/></svg></td><td>15 Ampere Power Socket<br>(15A-220V)</td></tr>
            <tr class="r-end"><td><svg viewBox="0 0 24 20"><path d="M12 0V11M6 18a6 7 0 0 1 12 0z" stroke="#888" fill="none"/><path d="M6 18a6 7 0 0 1 6-8v8z" fill="#222"/></svg><span class="gfci">GFCI</span></td><td>15 Ampere Circuit Socket<br>(Water Proof)</td></tr>
          </tbody></table>
          <table class="legend-t"><colgroup><col class="c-sym"><col></colgroup><thead>
            <tr><th colspan="2">Electrical System Legends</th></tr>
            <tr class="cols"><td>Symbol</td><td>Description</td></tr></thead><tbody>
            <tr class="r-mid"><td><span class="ring">F</span></td><td>Fan receptacle</td></tr>
            <tr class="r-end"><td><span class="tv">TV</span></td><td>TV Socket</td></tr>
          </tbody></table>
          <div class="box notes">Notes:</div>
        </div>
      </div>
      <svg class="pad zoompad" viewBox="0 0 120 120"><circle cx="60" cy="60" r="59"/><path d="M1 60H119"/><path class="f" d="M54 10h12v14h14v12H66v14H54V36H40V24h14zM40 86h40v12H40z"/></svg>
      <svg class="pad north" viewBox="0 0 220 60"><path d="M10 0a110 60 0 0 0 200 0"/><path class="f" d="M75 20L110 2l40 18z"/></svg>
      <svg class="pad south" viewBox="0 0 200 60"><path d="M2 60a98 60 0 0 1 196 0"/><path class="f b" d="M80 26h40l-20 14z"/></svg>
      <table class="quantities"><tbody>
        <tr><td><svg><use href="#i-area"/></svg></td><td><span dir="rtl">بلاط</span></td><td>447.1 SQ M</td><td><i class="olive"></i></td></tr>
        <tr><td><svg><use href="#i-segment"/></svg></td><td><span dir="rtl">جدران داخلية</span></td><td>106.3 M</td><td><i class="red"></i></td></tr>
        <tr><td><svg><use href="#i-segment"/></svg></td><td><span dir="rtl">جدران خارجية</span></td><td>187.4 M</td><td><i class="magenta"></i></td></tr>
        <tr><td><svg><use href="#i-segment"/></svg></td><td><span dir="rtl">زجاج قاطع الحمام ارتفاع ٤٠٠٠</span></td><td>3.3 M</td><td><i class="red"></i></td></tr>
        <tr><td><svg><use href="#i-linear"/></svg></td><td><span dir="rtl">بلاط جدران الحمام</span></td><td>57.7 M</td><td><i class="green"></i></td></tr>
        <tr><td><svg><use href="#i-segment"/></svg></td><td><span dir="rtl">سترة ارتفاع ١٨٠٠</span></td><td>38.7 M</td><td><i class="blue"></i></td></tr>
        <tr><td><svg><use href="#i-segment"/></svg></td><td><span dir="rtl">سترة ارتفاع ٤٠٠</span></td><td>19.3 M</td><td><i class="magenta"></i></td></tr>
        <tr><td><svg><use href="#i-area"/></svg></td><td><span dir="rtl">بلاط سطح خارجي</span></td><td>81.2 SQ M</td><td><i class="maroon"></i></td></tr>
      </tbody></table>
      <div class="overview">
        <svg viewBox="448 940 223 156"><g transform="translate(362 906) scale(.174)"><use href="#plan" opacity=".75"/>
          <g fill="none" stroke-width="22" opacity=".65"><path d="M930 863V797H895V285H1295V831H1190V386H1020V855H930" stroke="#d02ad0"/><path d="M1330 270V840" stroke="#3a2a9a" stroke-width="34"/><path d="M1340 860H1190V890H1330" stroke="#8a2a9a"/><path d="M960 300h90M1180 300h50M1240 400v60M1270 820h-40M950 660v60" stroke="#3fae4a" stroke-width="34"/></g></g>
          <path d="M498 1070H665M498 1073h46v22h-46zM546 1073h34v22h-34zM583 1073h34v22h-34zM498 1081H580M620 1075h4M650 1058h10M646 1063h9" fill="none" stroke="#a8c0d0"/>
          <path d="M505 1076h24M512 1085h16M512 1090h20M560 1075h12M592 1075h12M560 1082h14M592 1082h14" stroke="#8a9ba8"/></svg>
        <button aria-label="Shrink overview"><svg viewBox="0 0 18 18"><path d="M17 1L3 15M2 5V16H13" fill="none" stroke="#333" stroke-width="2"/></svg></button>
      </div>
    </div>
    <div class="vscroll">
      <button aria-label="Up"><svg viewBox="0 0 12 8"><path d="M1 7l5-6 5 6" /></svg></button>
      <span class="track"><span class="thumb"></span></span>
      <button aria-label="Down"><svg viewBox="0 0 12 8"><path d="M1 1l5 6 5-6"/></svg></button>
    </div>
    <div class="hscroll">
      <button aria-label="Left"><svg viewBox="0 0 8 12"><path d="M7 1L1 6l6 5"/></svg></button>
      <span class="track"><span class="thumb"></span></span>
      <button aria-label="Right"><svg viewBox="0 0 8 12"><path d="M1 1l6 5-6 5"/></svg></button>
    </div>
    <span class="mark-text" dir="rtl">خمسات</span>
  </section>

  <div class="splitter"><span></span></div>

  <aside class="panel right">
    <div class="panel-head"><h1>Templates, Parts,</h1></div>
    <div class="toolbar">
      <button aria-label="Properties"><svg><use href="#t-prop"/></svg></button>
      <button aria-label="Refresh"><svg><use href="#t-refresh"/></svg></button>
    </div>
    <div class="combo"><svg viewBox="0 0 22 22"><circle cx="11" cy="11" r="10" fill="#16d91a" stroke="#0c9c14"/><circle cx="8" cy="8" r="3" fill="#b6ffb0"/></svg><select aria-label="Template source"><option>Takeoff Templates</option></select></div>
    <ul class="folders">
      <li><button class="exp" aria-label="Expand">+</button><svg><use href="#p-folder"/></svg>Sitework</li>
      <li><button class="exp" aria-label="Expand">+</button><svg><use href="#p-folder"/></svg>Concrete &amp; Masonry</li>
      <li><button class="exp" aria-label="Expand">+</button><svg><use href="#p-folder"/></svg>Walls</li>
      <li><button class="exp" aria-label="Expand">+</button><svg><use href="#p-folder"/></svg>Painting</li>
      <li><button class="exp" aria-label="Expand">+</button><svg><use href="#p-folder"/></svg>Drywall</li>
      <li><button class="exp" aria-label="Expand">+</button><svg><use href="#p-folder"/></svg>Framing</li>
      <li><button class="exp" aria-label="Expand">+</button><svg><use href="#p-folder"/></svg>Insulation</li>
    </ul>
    <div class="side-scroll"><button aria-label="Scroll left"><svg viewBox="0 0 8 16"><path d="M8 0L0 8l8 8z"/></svg></button></div>
    <div class="grip end"><span class="wide"></span></div>
    <div class="toolbar">
      <button aria-label="Properties"><svg><use href="#t-prop"/></svg></button>
      <button aria-label="Delete"><svg><use href="#t-x"/></svg></button>
      <button aria-label="Table"><svg><use href="#t-grid"/></svg></button>
      <button aria-label="Refresh"><svg><use href="#t-refresh"/></svg></button>
    </div>
    <div class="grip end"><span class="wide"></span></div>
    <div class="props"><table>
      <thead><tr><th>Property</th><th>Value</th></tr></thead>
      <tbody><tr><td>Name</td><td><span dir="rtl">الدور الاول &nbsp;٠٤</span></td></tr></tbody>
    </table></div>
    <div class="grip end"><span></span></div>
    <nav class="stack">
      <button class="active"><svg><use href="#n-box"/></svg>Templates, Parts, I</button>
      <button><svg><use href="#n-swift"/></svg>SwiftMarket</button>
      <button><svg><use href="#n-plug"/></svg>Download Plugins</button>
      <button class="more" aria-label="More"></button>
    </nav>
  </aside>
</main>
<footer class="status"><span></span><span></span><span></span><span></span><span></span><span></span><span></span><span></span><span></span></footer>
</body>
</html>
```
FILE: styles.css
```css
* { box-sizing: border-box; }
html, body { height: 100%; }
body {
  margin: 0;
  display: flex;
  flex-direction: column;
  overflow: hidden;
  background: linear-gradient(#cfd0d8, #cfd0d8) 54px 0 / 86px 3px no-repeat #3c3d42;
  color: #1c1c1c;
  font-family: "Noto Sans", "Open Sans", "DejaVu Sans", sans-serif;
  font-size: 17px;
}
button { border: 0; padding: 0; margin: 0; background: none; font: inherit; color: inherit; }
h1, h2, p, ul { margin: 0; padding: 0; }
ul { list-style: none; }
.defs { position: absolute; width: 0; height: 0; }

/* ribbon */
.ribbon {
  display: grid;
  grid-template-columns: 299fr 148fr 399fr 203fr 417fr 200fr 380fr;
  gap: 6px;
  padding: 6px 1px 4px 3px;
  height: 164px;
  margin-top: 3px;
  flex: none;
  background: #d3d5da;
}
.group {
  display: flex;
  flex-direction: column;
  min-width: 0;
  border: 1px solid #8f9298;
  border-radius: 5px;
  overflow: hidden;
  background: linear-gradient(#d3d5da 0, #c8cbd2 17%, #b9bdc7 18%, #cdd1d8 40%, #e2e7e9 70%);
}
.group h2 {
  height: 30px;
  text-align: center;
  color: #fff;
  font: 400 18px/30px "Open Sans", sans-serif;
  background: linear-gradient(#a3a6a6, #959998);
}
.tools { flex: 1; display: grid; justify-content: start; padding: 8px 0 0 2px; }
.g-job .tools { grid-template-columns: repeat(4, 72px); }
.g-nav .tools { grid-template-columns: repeat(2, 72px); }
.g-zoom .tools { grid-template-columns: repeat(4, 80px) 72px; }
.g-measure .tools { grid-template-columns: 82px 108px; padding-left: 0; }
.g-takeoff .tools { grid-template-columns: 74px 76px 108px 78px 76px; }
.g-record .tools { grid-template-columns: 98px 92px; }
.g-notes .tools { grid-template-columns: 72px 92px 128px 80px; }
.tool {
  display: block;
  align-self: start;
  text-align: center;
  font: 18px/24px "Open Sans", sans-serif;
  color: #3b3b3d;
  white-space: nowrap;
}
.tool svg { display: block; width: 54px; height: 56px; margin: 0 auto 7px; }
.tool:disabled { color: #97999d; }
.tool.drop::after {
  content: "";
  display: block;
  width: 0;
  margin: 9px auto 0;
  border: 4px solid transparent;
  border-top: 6px solid #555;
}

/* work area */
.work { flex: 1; min-height: 0; display: flex; margin-top: 5px; }
.panel { display: flex; flex-direction: column; overflow: hidden; background: #fff; }
.left { width: 435px; flex: none; border-right: 2px solid #3d3f43; }
.right { width: 218px; flex: none; border-left: 2px solid #3d3f43; }
.panel-head {
  display: flex;
  align-items: center;
  justify-content: space-between;
  flex: none;
  height: 47px;
  padding: 0 12px 0 9px;
  background: linear-gradient(#eceef0, #bcc0c9);
  border-bottom: 2px solid #4a4c50;
}
.right .panel-head { padding: 0 0 0 12px; }
.panel-head h1 { font: bold 24px/30px "Liberation Sans", Arial, sans-serif; color: #111; white-space: nowrap; }
.collapse svg { display: block; width: 14px; height: 12px; }
.toolbar {
  display: flex;
  align-items: center;
  gap: 17px;
  flex: none;
  height: 48px;
  padding-left: 12px;
  border-bottom: 3px solid #3d3f43;
  border-radius: 0 6px 6px 0;
  background: linear-gradient(#b8bbc4 0, #ccd0d8 12%, #bcc0ca 60%, #d9dcdf 66%, #ecefef 100%);
}
.toolbar svg { display: block; width: 24px; height: 24px; }
.search { display: flex; flex: none; height: 34px; border-bottom: 2px solid #77797d; }
.search label { width: 79px; padding-left: 7px; line-height: 32px; background: #ececec; font-size: 18px; }
.search input { flex: 1; min-width: 0; border: 0; border-left: 2px solid #555; outline: 0; font: inherit; }
.tree-wrap { flex: 1; min-height: 0; display: flex; }
.tree {
  flex: 1;
  min-width: 0;
  display: grid;
  grid-auto-rows: minmax(0, 1fr);
  overflow: hidden;
  padding-top: 3px;
  background: repeating-linear-gradient(#999 0 1px, transparent 1px 3px) 7px 0 / 1px 100% no-repeat;
}
.tree li { position: relative; display: flex; align-items: center; }
.tree .item { padding-left: 46px; padding-right: 6px; gap: 8px; background: repeating-linear-gradient(#999 0 1px, transparent 1px 3px) 34px 0 / 1px 100% no-repeat; }
.tree .page { padding-left: 21px; padding-right: 6px; gap: 11px; }
.item::before, .page::before {
  content: "";
  position: absolute;
  left: 34px;
  top: 13px;
  width: 12px;
  border-top: 1px dotted #999;
}
.page::before { left: 7px; }
.name { flex: 1; min-width: 0; text-align: left; white-space: nowrap; font: 17px/26px "DejaVu Sans", sans-serif; }
.ic, .sw, .bulb, .pg, .arr, .mark { flex: none; }
.ic { width: 24px; height: 24px; }
.item b { font: bold 16px/26px "DejaVu Sans", sans-serif; color: #0a05b8; }
.sw { width: 25px; height: 20px; border: 1px solid #999; }
.bulb { width: 18px; height: 24px; margin-left: 5px; }
.pg { width: 21px; height: 24px; }
.arr { width: 20px; height: 12px; }
.mark { width: 22px; height: 22px; }
.selected { background: #0a74d8; color: #fff; }
.selected .name { font-weight: bold; font-size: 16px; }
.selected .exp { background: #4b9be4; color: #123; }
.selected .arr { background: #fff; border-radius: 10px; }
.exp {
  position: absolute;
  left: 0;
  width: 15px;
  height: 15px;
  z-index: 1;
  border: 1px solid #888;
  background: #fff;
  font: bold 15px/11px "DejaVu Sans", sans-serif;
  text-align: center;
}
.magenta { background: #f0f; } .cyan { background: #0ff; } .olive { background: #7d7d0c; }
.blue { background: #00f; } .red { background: #f00; } .green { background: #0f0; }
.tree-scroll { width: 28px; flex: none; display: flex; flex-direction: column; background: #f1f1f1; }
.tree-scroll button, .tree-scroll .thumb { height: 28px; flex: none; border: 2px solid #111; background: #f6f6f6; }
.tree-scroll .thumb { height: 42px; }
.tree-scroll button svg { display: block; width: 16px; height: 8px; margin: 0 auto; }
.space-a { flex: 118; } .space-b { flex: 296; }
.total {
  flex: none;
  height: 35px;
  padding-left: 4px;
  line-height: 32px;
  font-size: 17px;
  border-top: 2px solid #999;
  border-bottom: 2px solid #4a4c50;
  background: linear-gradient(#e9ebed, #c4c8cd);
}
.grip { flex: none; height: 14px; display: flex; justify-content: center; align-items: center; background: linear-gradient(#fbfbfb, #c9ccd0); }
.grip.thin { height: 12px; }
.grip span { width: 32px; height: 5px; background: repeating-linear-gradient(105deg, #333 0 2px, #fff 2px 4px, transparent 4px 6px); }
.grip .wide { width: 65px; }
.grip.end { justify-content: flex-end; border-top: 1px solid #666; }
.grip.end .wide { width: 50px; }
.stack { flex: none; }
.stack button {
  display: flex;
  align-items: center;
  gap: 8px;
  width: 100%;
  height: 40px;
  padding-left: 3px;
  border-top: 2px solid #55585c;
  background: linear-gradient(#fafafa 0, #e2e4e8 48%, #c3c7cd 52%, #dcdfe1 100%);
  font: bold 19px/24px "Noto Sans", "Open Sans", sans-serif;
  color: #2b2e35;
  white-space: nowrap;
}
.right .stack button { padding-left: 4px; gap: 9px; font-size: 18px; }
.stack svg { width: 24px; height: 26px; flex: none; }
.stack .active { background: linear-gradient(#fdd9a6 0, #fbc273 45%, #f8a43a 55%, #ffe07c 100%); }
.stack .more { justify-content: flex-end; padding-right: 12px; }
.stack .more svg { width: 9px; height: 6px; }

.splitter { width: 13px; flex: none; display: flex; align-items: center; justify-content: center; background: linear-gradient(90deg, #c6cdd5, #eff2f5 60%, #c3c8ce); }
.splitter span { width: 4px; height: 66px; background: repeating-linear-gradient(#444 0 3px, transparent 3px 7px); }

/* drawing view */
.view { position: relative; flex: 1; min-width: 0; display: grid; grid-template: minmax(0, 1fr) 27px / minmax(0, 1fr) 27px; background: #efefef; }
.canvas { position: relative; overflow: hidden; background: #9f968b; }
.sheet { height: 100%; margin: 0 39px 0 37px; padding: 11px 7px 8px 9px; display: flex; flex-direction: column; gap: 6px; background: #fff; }
.frame { flex: 1; min-height: 0; box-shadow: inset 0 0 0 2px #b5b5b5; }
.plan { display: block; width: 100%; height: 100%; overflow: visible; }
.tag { font: 6px "Liberation Serif", serif; fill: #222; }
.small { font: bold 7px "DejaVu Sans", sans-serif; fill: #2a2a12; }
.axis { font: 20px "Liberation Serif", serif; }
.axis .sans { font-family: "Open Sans", sans-serif; }
.dim { font: 13px "Open Sans", sans-serif; fill: #bbb; }
.plate { font: bold 10px "Open Sans", sans-serif; }
.sub { font: 14px "DejaVu Sans", sans-serif; }
.titles { flex: none; height: 141px; display: grid; grid-template-columns: 256fr 247fr 198fr 199fr 352fr; gap: 9px; font-family: "Liberation Serif", serif; font-size: 12px; line-height: 13px; }
.box { border: 1px solid #888; }
.notes { padding: 4px 9px; background: linear-gradient(#888, #888) 0 23px / 100% 1px no-repeat; }
.titles table { width: 100%; height: 100%; border-collapse: collapse; table-layout: fixed; }
.titles td, .titles th { border: 1px solid #888; padding: 0 4px; white-space: nowrap; }
.client td { vertical-align: top; padding-top: 3px; }
.client strong { display: block; text-align: center; font-size: 16px; line-height: 26px; }
.client .proj { font-size: 13px; line-height: 22px; }
.client em { display: block; padding-left: 16px; font: 11px/12px "Open Sans", sans-serif; color: #999; margin-top: 2px; }
.client span { color: #999; font-family: "Open Sans", sans-serif; }
.client .far { margin-left: 24px; }
.r-big { height: 49px; } .r-mid { height: 45px; } .r-low { height: 23px; } .r-end { height: 47px; }
.legend-t { text-align: center; font-size: 10px; line-height: 12px; }
.legend-t th { font-size: 11px; height: 23px; }
.legend-t .cols { height: 24px; font-size: 12px; }
.c-sym { width: 63px; }
.legend-t svg { display: block; width: 24px; height: 20px; margin: 0 auto; }
.gfci { font-size: 12px; }
.ring { display: inline-block; width: 22px; height: 22px; border: 1px solid #999; border-radius: 50%; font-size: 16px; line-height: 20px; }
.tv { font-size: 18px; line-height: 24px; }

.pad { position: absolute; fill: none; stroke: rgba(120, 120, 130, .15); }
.pad .f { fill: rgba(130, 150, 180, .09); stroke: none; }
.pad .b { fill: rgba(70, 130, 200, .25); }
.zoompad { right: 5px; top: 5px; width: 120px; height: 120px; }
.north { left: 580px; top: 11px; width: 220px; height: 44px; }
.south { left: 590px; bottom: 0; width: 200px; height: 60px; stroke-width: 3; }
.mark-text { position: absolute; left: 470px; bottom: -3px; font: bold 62px/62px "DejaVu Sans", sans-serif; color: rgba(120, 120, 120, .2); pointer-events: none; }

.quantities { position: absolute; left: 53px; top: 129px; width: 326px; height: 205px; padding: 3px 4px; border: 2px solid #111; background: #fff; border-spacing: 0; font: 15px/20px "Liberation Sans", "DejaVu Sans", sans-serif; }
.quantities td { padding: 0; height: 24px; white-space: nowrap; vertical-align: middle; }
.quantities td:first-child { width: 25px; }
.quantities svg { display: block; width: 20px; height: 20px; }
.quantities td:nth-child(2) { text-align: left; }
.quantities td:nth-child(3) { text-align: right; font-weight: bold; color: #1b14c4; padding-right: 3px; }
.quantities td:last-child { width: 20px; }
.quantities i { display: block; width: 20px; height: 21px; border: 2px solid #111; }
.quantities .olive { background: #b3b064; } .quantities .red { background: #ff5c5c; } .quantities .magenta { background: #f75cf7; }
.quantities .green { background: #5cf75c; } .quantities .blue { background: #5c5cf2; } .quantities .maroon { background: #b05a5e; }

.overview { position: absolute; left: 0; bottom: 0; width: 235px; height: 168px; padding: 9px 11px 0 0; background: #dfe2e5; }
.overview > svg { display: block; width: 100%; height: 100%; border-top: 2px solid #222; border-right: 1px solid #444; background: #c2d9e9; }
.overview button { position: absolute; left: 0; bottom: 1px; width: 30px; height: 29px; border: 1px solid #666; background: #f4f4f4; }
.overview button svg { display: block; width: 20px; height: 20px; margin: 0 auto; }

.vscroll, .hscroll { display: flex; }
.vscroll { flex-direction: column; padding-left: 2px; }
.vscroll button { height: 28px; }
.hscroll button { width: 28px; }
.vscroll svg { width: 12px; height: 8px; } .hscroll svg { width: 8px; height: 12px; }
.vscroll path, .hscroll path { fill: none; stroke: #333; stroke-width: 2; }
.track { flex: 1; display: flex; }
.vscroll .track { flex-direction: column; padding-top: 254px; }
.vscroll .thumb { width: 25px; height: 59%; background: #cbcbcb; }
.hscroll .track { padding-left: 313px; }
.hscroll .thumb { width: 69%; background: #cbcbcb; }

/* right panel */
.combo { display: flex; align-items: center; gap: 8px; flex: none; height: 36px; margin: 6px 0 5px 8px; padding-left: 6px; border: 2px solid #555; border-right: 0; }
.combo svg { width: 22px; height: 22px; flex: none; }
.combo select { appearance: none; border: 0; padding: 0; background: none; font: 17px/24px "Open Sans", sans-serif; color: #222; }
.folders { flex: none; border-top: 2px solid #888; }
.folders li { position: relative; display: flex; align-items: center; gap: 5px; height: 28px; padding-left: 31px; white-space: nowrap; font: 17px/24px "Noto Sans", sans-serif; color: #222; }
.folders svg { width: 26px; height: 22px; flex: none; }
.folders .exp { left: 8px; }
.side-scroll { flex: none; height: 29px; border: 2px solid #111; border-right: 0; background: #efefef; }
.side-scroll button { width: 28px; height: 100%; border-right: 3px solid #111; background: #fff; }
.side-scroll svg { width: 8px; height: 16px; }
.props { flex: 1; min-height: 0; overflow: hidden; }
.props table { width: 100%; border-collapse: collapse; font-size: 17px; }
.props th, .props td { height: 30px; padding: 0 4px; font-weight: 400; text-align: left; white-space: nowrap; }
.props th { border: 2px solid #222; background: #efefef; }
.props td { border: 1px solid #aaa; }
.props th:first-child { width: 103px; }
.props td span { font: 16px/20px "DejaVu Sans", sans-serif; }

.status { flex: none; height: 13px; display: grid; grid-template-columns: 503px 308px 109px 55px 62px 94px 115px 242px 1fr; background: #41434c; }
.status span { border-right: 3px double #d5d5d8; }
.status span:last-child { border: 0; }
```
